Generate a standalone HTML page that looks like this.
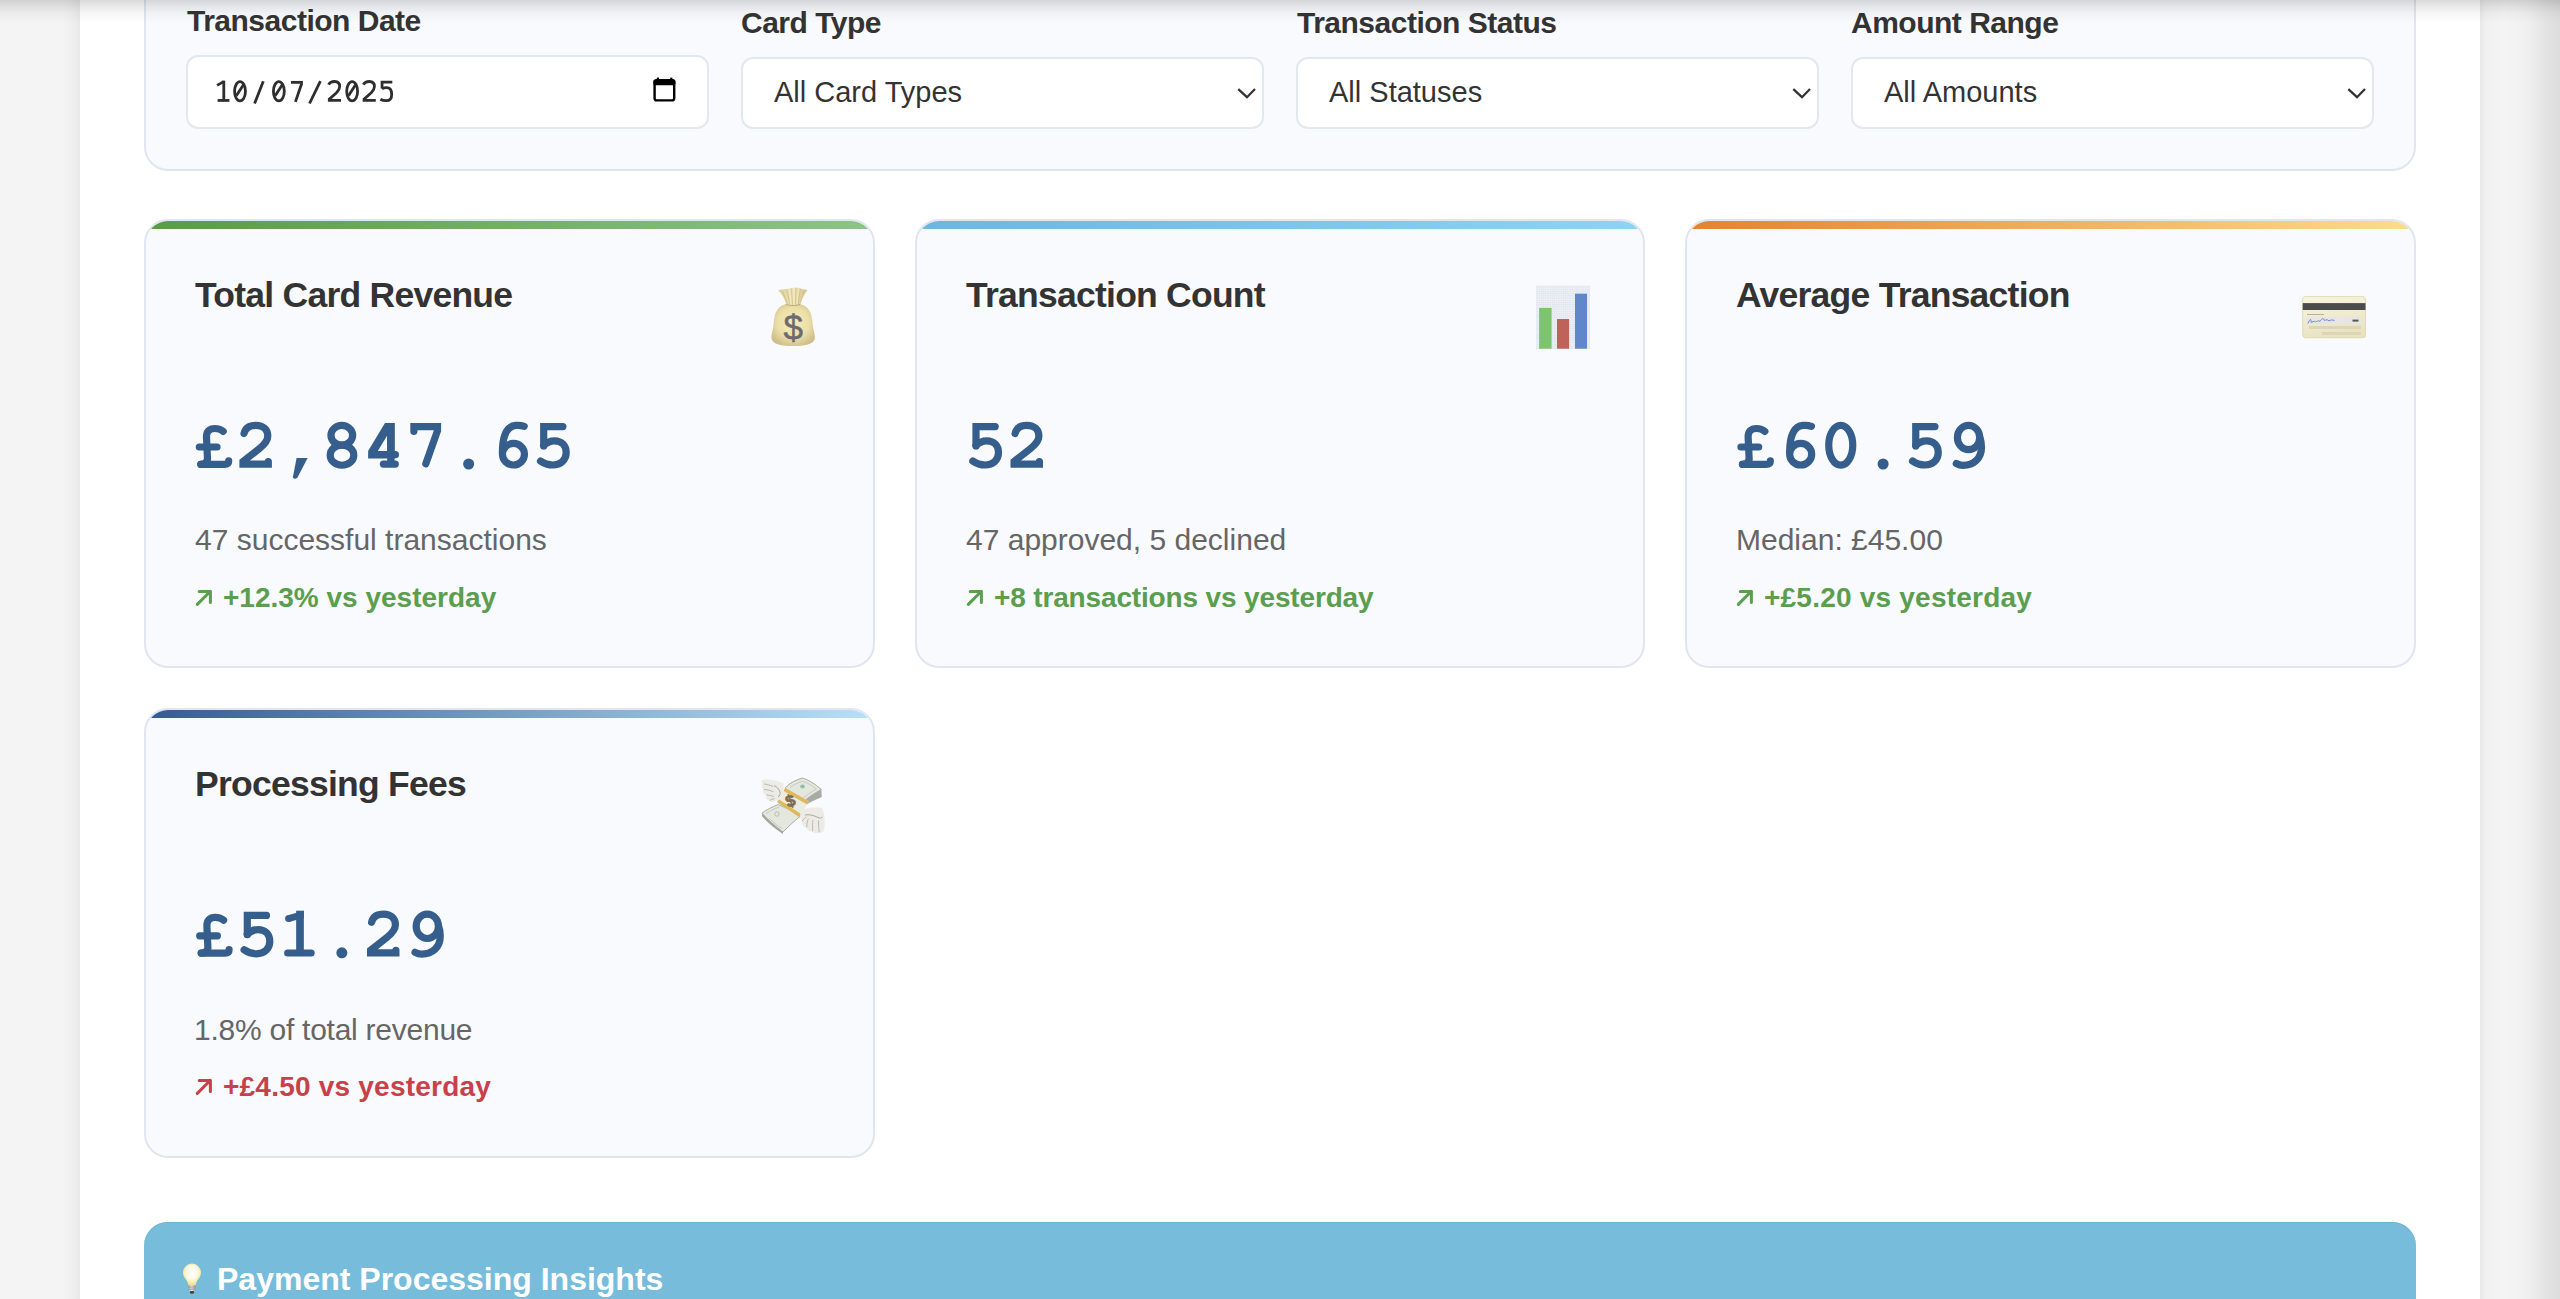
<!DOCTYPE html>
<html>
<head>
<meta charset="utf-8">
<style>
html,body{margin:0;padding:0;}
body{width:2560px;height:1299px;overflow:hidden;position:relative;background:#f5f5f5;font-family:"Liberation Sans",sans-serif;}
.abs{position:absolute;}
#edgeL{left:0;top:0;width:80px;height:1299px;background:linear-gradient(to right,#f4f4f4 0px,#f4f4f4 62px,#f0f0f0 70px,#ececec 76px,#e8e8e8 80px);}
#edgeR{left:2480px;top:0;width:80px;height:1299px;background:linear-gradient(to right,#e8e8e8 0px,#f1f1f1 6px,#f4f4f4 24px,#f2f2f2 40px,#f0f0f0 46px,#ebebeb 55px,#e4e4e4 65px,#dcdcdc 80px);}
#container{left:80px;top:0;width:2400px;height:1299px;background:#fff;}
#topshadow{left:0;top:0;width:2560px;height:24px;background:linear-gradient(to bottom,rgba(0,0,0,0.145) 0px,rgba(0,0,0,0.085) 6px,rgba(0,0,0,0.035) 13px,rgba(0,0,0,0) 23px);z-index:50;}
.panel{box-sizing:border-box;border:2px solid #e0e6ef;background:#f8fafd;border-radius:24px;}
.lbl{font-weight:bold;font-size:30px;line-height:30px;color:#333;letter-spacing:-0.5px;white-space:nowrap;}
.inp{box-sizing:border-box;border:2px solid #e2e8f0;background:#fff;border-radius:12px;}
.seltxt{font-size:29px;line-height:29px;color:#333;white-space:nowrap;}
.card{box-sizing:border-box;border:2px solid #e0e6ef;background:#f8fafd;border-radius:24px;overflow:hidden;}
.bar{position:absolute;left:0;top:0;right:0;height:8px;}
.ttl{font-weight:bold;font-size:35.5px;line-height:36px;color:#333;letter-spacing:-0.75px;white-space:nowrap;}
.sub{font-size:30px;line-height:28px;color:#666;letter-spacing:0px;white-space:nowrap;}
.chg{font-weight:bold;font-size:28px;line-height:28px;color:#5a9e4e;white-space:nowrap;}
.chg.neg{color:#c8404a;}
.arr{display:inline-block;vertical-align:top;position:relative;top:3px;left:-1px;margin-right:0px;}
</style>
</head>
<body>
<div id="edgeL" class="abs"></div>
<div id="edgeR" class="abs"></div>
<div id="container" class="abs"></div>

<!-- filter panel -->
<div class="abs panel" style="left:144px;top:-80px;width:2272px;height:251px;"></div>

<div class="abs lbl" style="left:187px;top:6px;">Transaction Date</div>
<div class="abs lbl" style="left:741px;top:8px;">Card Type</div>
<div class="abs lbl" style="left:1297px;top:8px;">Transaction Status</div>
<div class="abs lbl" style="left:1851px;top:8px;">Amount Range</div>

<div class="abs inp" style="left:186px;top:55px;width:523px;height:74px;"></div>
<div class="abs inp" style="left:741px;top:57px;width:523px;height:72px;"></div>
<div class="abs inp" style="left:1296px;top:57px;width:523px;height:72px;"></div>
<div class="abs inp" style="left:1851px;top:57px;width:523px;height:72px;"></div>

<svg class="abs" style="left:0px;top:0px;" width="420" height="120" viewBox="0 0 420 120">
<path d="M217.1 85.4 L223.6 81.6" fill="none" stroke="#2e2e2e" stroke-width="2.8" stroke-width="3"/>
<path d="M223.8 80.6 L223.8 99.5" fill="none" stroke="#2e2e2e" stroke-width="2.8"/>
<path d="M217.6 100.45 L229.4 100.45" fill="none" stroke="#2e2e2e" stroke-width="2.8" stroke-width="2.7"/>
<ellipse cx="240" cy="91.3" rx="5.45" ry="9.6" fill="none" stroke="#2e2e2e" stroke-width="2.8"/><path d="M236.3 95.7 L243.8 84.3" fill="none" stroke="#2e2e2e" stroke-width="2.8" stroke-width="2.6"/>
<path d="M254.6 103.5 L263.3 81.2" fill="none" stroke="#2e2e2e" stroke-width="2.8"/>
<ellipse cx="278.85" cy="91.3" rx="5.45" ry="9.6" fill="none" stroke="#2e2e2e" stroke-width="2.8"/><path d="M275.15000000000003 95.7 L282.65000000000003 84.3" fill="none" stroke="#2e2e2e" stroke-width="2.8" stroke-width="2.6"/>
<path d="M291 82.35 L302.9 82.35" fill="none" stroke="#2e2e2e" stroke-width="2.8" stroke-width="2.7"/>
<path d="M301.8 83.3 L295.4 101.9" fill="none" stroke="#2e2e2e" stroke-width="2.8" stroke-width="2.9"/>
<path d="M309.5 103.5 L320.4 81.2" fill="none" stroke="#2e2e2e" stroke-width="2.8"/>
<path transform="translate(0 0)" d="M328.5 84.6 C330 82 332.3 81.5 334.6 81.5 C338 81.5 339.7 83.6 339.7 86.6 C339.7 89 338.5 90.8 336.5 92.8 L329.3 99.2 L329.3 100.3 L341 100.3" fill="none" stroke="#2e2e2e" stroke-width="2.8" stroke-linejoin="miter"/>
<ellipse cx="352.15" cy="91.3" rx="5.45" ry="9.6" fill="none" stroke="#2e2e2e" stroke-width="2.8"/><path d="M348.45 95.7 L355.95 84.3" fill="none" stroke="#2e2e2e" stroke-width="2.8" stroke-width="2.6"/>
<path transform="translate(34.75 0)" d="M328.5 84.6 C330 82 332.3 81.5 334.6 81.5 C338 81.5 339.7 83.6 339.7 86.6 C339.7 89 338.5 90.8 336.5 92.8 L329.3 99.2 L329.3 100.3 L341 100.3" fill="none" stroke="#2e2e2e" stroke-width="2.8" stroke-linejoin="miter"/>
<path d="M392.3 82.05 L382.05 82.05 L382.05 88.4" fill="none" stroke="#2e2e2e" stroke-width="2.8" stroke-linejoin="miter" stroke-width="2.6"/>
<path d="M382.05 88.8 C383.5 87.9 385 87.6 386.5 87.6 C390.5 87.6 391.7 90.6 391.7 94.4 C391.7 98.6 389.6 100.7 386.2 100.7 C384 100.7 382 100.2 380.4 99.2" fill="none" stroke="#2e2e2e" stroke-width="2.8"/>
</svg>
<svg class="abs" style="left:650px;top:75px;" width="30" height="30" viewBox="0 0 30 30">
  <rect x="4.6" y="5.2" width="19.6" height="20.2" rx="2.2" fill="none" stroke="#000" stroke-width="2.4"/>
  <rect x="3.4" y="4.6" width="22" height="5.6" rx="1.5" fill="#000"/>
  <rect x="6.8" y="2.6" width="2.2" height="4" fill="#000"/>
  <rect x="20.2" y="2.6" width="2.2" height="4" fill="#000"/>
</svg>

<div class="abs seltxt" style="left:774px;top:78px;">All Card Types</div>
<div class="abs seltxt" style="left:1329px;top:78px;">All Statuses</div>
<div class="abs seltxt" style="left:1884px;top:78px;">All Amounts</div>

<svg class="abs" style="left:1236px;top:86px;" width="22" height="14" viewBox="0 0 22 14"><path d="M2.3 3.1 L11 11.2 L19 3" fill="none" stroke="#333" stroke-width="2.3"/></svg>
<svg class="abs" style="left:1791px;top:86px;" width="22" height="14" viewBox="0 0 22 14"><path d="M2.3 3.1 L11 11.2 L19 3" fill="none" stroke="#333" stroke-width="2.3"/></svg>
<svg class="abs" style="left:2346px;top:86px;" width="22" height="14" viewBox="0 0 22 14"><path d="M2.3 3.1 L11 11.2 L19 3" fill="none" stroke="#333" stroke-width="2.3"/></svg>

<!-- cards -->
<div class="abs card" style="left:144px;top:219px;width:731px;height:449px;"><div class="bar" style="background:linear-gradient(to right,#5a9a4b,#8cc487);"></div></div>
<div class="abs card" style="left:915px;top:219px;width:730px;height:449px;"><div class="bar" style="background:linear-gradient(to right,#6fb6d8,#8fd2f4);"></div></div>
<div class="abs card" style="left:1685px;top:219px;width:731px;height:449px;"><div class="bar" style="background:linear-gradient(to right,#e5822f,#f9dd8c);"></div></div>
<div class="abs card" style="left:144px;top:708px;width:731px;height:450px;"><div class="bar" style="background:linear-gradient(to right,#355c8c,#b8e0f8);"></div></div>

<div class="abs ttl" style="left:195px;top:277px;">Total Card Revenue</div>
<div class="abs ttl" style="left:966px;top:277px;">Transaction Count</div>
<div class="abs ttl" style="left:1736px;top:277px;">Average Transaction</div>
<div class="abs ttl" style="left:195px;top:766px;">Processing Fees</div>


<!-- VALS -->
<svg class="abs" style="left:0;top:0;" width="0" height="0"><defs>
<g id="gL"><path d="M-14.6 -20.7 L3.1 -20.7" fill="none" stroke="#355e8c" stroke-width="7.2" stroke-linecap="round"/>
<path d="M-13.1 -3.4 L10.5 -3.4 Q14.8 -3.4 14.8 -6.8" fill="none" stroke="#355e8c" stroke-width="7.2" stroke-linecap="round" stroke-linejoin="round"/>
<path d="M-13.1 -3.4 Q-7 -3.6 -6.4 -8.5 L-7.4 -30 C-7.9 -36 -4.5 -39.2 1 -39.2 C4.5 -39.2 7.5 -38 9.3 -36.3" fill="none" stroke="#355e8c" stroke-width="7.2" stroke-linecap="round" stroke-linejoin="round"/></g>
<g id="g2"><path d="M-12.3 -34.2 C-10.8 -40.7 -6.3 -42.4 -0.3 -42.4 C6.7 -42.4 11.5 -38.2 11.5 -31.7 C11.5 -26.7 8.2 -23.2 3.2 -19.2 L-13.3 -6.2 L-13.3 -3.6 L12 -3.6 L12 -6.2" fill="none" stroke="#355e8c" stroke-width="7.2" stroke-linecap="round" stroke-linejoin="miter" stroke-miterlimit="10"/></g>
<g id="gc"><path d="M-2.1 -9.7 L8.9 -9.7 L-1.2 9.8 Q-3.7 12.3 -5.9 9.8 Z" fill="#355e8c"/></g>
<g id="g8"><ellipse cx="0.7" cy="-32.4" rx="10.85" ry="9.85" fill="none" stroke="#355e8c" stroke-width="7.2" stroke-linecap="round"/>
<ellipse cx="0.9" cy="-12.5" rx="11.8" ry="10.05" fill="none" stroke="#355e8c" stroke-width="7.2" stroke-linecap="round"/></g>
<g id="g4"><path d="M1.5 -44.6 L11.1 -44.6 L11.1 -9.3 L-15.4 -9.3 L-15.4 -16.7 Z M-5.7 -16.7 L3.7 -16.7 L3.7 -32.3 Z" fill="#355e8c" fill-rule="evenodd"/>
<rect x="3.7" y="-44.6" width="7.4" height="41.1" fill="#355e8c"/>
<path d="M11.1 -13 L11.9 -13" fill="none" stroke="#355e8c" stroke-width="7.2" stroke-linecap="round"/>
<path d="M-0.1 -3.6 L11.8 -3.6" fill="none" stroke="#355e8c" stroke-width="7.2" stroke-linecap="round"/></g>
<g id="g7"><path d="M-12 -36.4 L-12 -41 L11.6 -41 L11.6 -37 L-0.1 -3.9" fill="none" stroke="#355e8c" stroke-width="7.2" stroke-linecap="round" stroke-linejoin="miter"/></g>
<g id="gd"><circle cx="0.35" cy="-3.7" r="5.5" fill="#355e8c"/></g>
<g id="g6"><ellipse cx="2.75" cy="-13.5" rx="11" ry="10.8" fill="none" stroke="#355e8c" stroke-width="7.2" stroke-linecap="round"/>
<path d="M13.5 -41.4 C11 -42.3 8 -42.6 5 -42.3 C-3 -41.5 -8.3 -33 -8.3 -15" fill="none" stroke="#355e8c" stroke-width="7.2" stroke-linecap="round"/></g>
<g id="g5"><path d="M9.8 -41.1 L-9.4 -41.1 L-9.4 -21.8" fill="none" stroke="#355e8c" stroke-width="7.2" stroke-linecap="round" stroke-linejoin="miter"/>
<path d="M-9.4 -22.2 C-6.1 -25.7 -2.1 -26.9 1.4 -26.9 C8.9 -26.9 13.1 -21.7 13.1 -15.2 C13.1 -7.7 7.4 -2.7 -0.1 -2.7 C-5.1 -2.7 -9.1 -4.2 -12.6 -6.7" fill="none" stroke="#355e8c" stroke-width="7.2" stroke-linecap="round"/></g>
<g id="g0"><ellipse cx="0.4" cy="-22.4" rx="12" ry="19.9" fill="none" stroke="#355e8c" stroke-width="7.2" stroke-linecap="round"/></g>
<g id="g9"><ellipse cx="1" cy="-30.2" rx="11.15" ry="12.2" fill="none" stroke="#355e8c" stroke-width="7.2" stroke-linecap="round"/>
<path d="M12.15 -31 C13.4 -27.5 13.95 -24.5 13.95 -20.5 C13.95 -9.5 6.45 -2.4 -4.55 -2.4 C-7.05 -2.4 -9.05 -3 -11.25 -4.2" fill="none" stroke="#355e8c" stroke-width="7.2" stroke-linecap="round"/></g>
<g id="g1"><rect x="-2.95" y="-45.8" width="7.7" height="42.4" fill="#355e8c"/>
<path d="M-10.4 -41.6 L4.75 -45.8 L4.75 -38.5 L-10.4 -34.4 Z" fill="#355e8c"/>
<circle cx="-10.4" cy="-38" r="3.6" fill="#355e8c"/>
<path d="M-11.4 -3.5 L12 -3.5" fill="none" stroke="#355e8c" stroke-width="7.2" stroke-linecap="round" stroke-width="7.4"/></g>
</defs></svg>
<svg class="abs" style="left:183px;top:407px;" width="441" height="80" viewBox="0 0 441 80"><use href="#gL" x="30.90" y="60.70"/><use href="#g2" x="73.30" y="60.70"/><use href="#gc" x="115.70" y="60.70"/><use href="#g8" x="158.10" y="60.70"/><use href="#g4" x="200.50" y="60.70"/><use href="#g7" x="242.90" y="60.70"/><use href="#gd" x="285.30" y="60.70"/><use href="#g6" x="327.70" y="60.70"/><use href="#g5" x="370.10" y="60.70"/></svg>
<svg class="abs" style="left:955px;top:407px;" width="144" height="80" viewBox="0 0 144 80"><use href="#g5" x="30.40" y="60.70"/><use href="#g2" x="72.40" y="60.70"/></svg>
<svg class="abs" style="left:1725px;top:407px;" width="314" height="80" viewBox="0 0 314 80"><use href="#gL" x="30.55" y="60.70"/><use href="#g6" x="72.95" y="60.70"/><use href="#g0" x="115.35" y="60.70"/><use href="#gd" x="157.75" y="60.70"/><use href="#g5" x="200.15" y="60.70"/><use href="#g9" x="242.55" y="60.70"/></svg>
<svg class="abs" style="left:184px;top:896px;" width="314" height="80" viewBox="0 0 314 80"><use href="#gL" x="30.30" y="60.50"/><use href="#g5" x="72.70" y="60.50"/><use href="#g1" x="115.10" y="60.50"/><use href="#gd" x="157.50" y="60.50"/><use href="#g2" x="199.90" y="60.50"/><use href="#g9" x="242.30" y="60.50"/></svg>
<!-- /VALS -->
<div class="abs sub" style="left:195px;top:526px;">47 successful transactions</div>
<div class="abs sub" style="left:966px;top:526px;">47 approved, 5 declined</div>
<div class="abs sub" style="left:1736px;top:526px;">Median: £45.00</div>
<div class="abs sub" style="left:194px;top:1016px;letter-spacing:-0.25px;">1.8% of total revenue</div>

<div class="abs chg" style="left:195px;top:584px;"><svg class="arr" width="28" height="28" viewBox="0 0 28 28"><path d="M3.3 17.4 L16.4 4.3 M5.2 4.4 L16.4 4.4 L16.4 15.6" fill="none" stroke="currentColor" stroke-width="3" stroke-linecap="round" stroke-linejoin="round"/></svg>+12.3% vs yesterday</div>
<div class="abs chg" style="left:966px;top:584px;letter-spacing:-0.15px;"><svg class="arr" width="28" height="28" viewBox="0 0 28 28"><path d="M3.3 17.4 L16.4 4.3 M5.2 4.4 L16.4 4.4 L16.4 15.6" fill="none" stroke="currentColor" stroke-width="3" stroke-linecap="round" stroke-linejoin="round"/></svg>+8 transactions vs yesterday</div>
<div class="abs chg" style="left:1736px;top:584px;letter-spacing:0.22px;"><svg class="arr" width="28" height="28" viewBox="0 0 28 28"><path d="M3.3 17.4 L16.4 4.3 M5.2 4.4 L16.4 4.4 L16.4 15.6" fill="none" stroke="currentColor" stroke-width="3" stroke-linecap="round" stroke-linejoin="round"/></svg>+£5.20 vs yesterday</div>
<div class="abs chg neg" style="left:195px;top:1073px;letter-spacing:0.22px;"><svg class="arr" width="28" height="28" viewBox="0 0 28 28"><path d="M3.3 17.4 L16.4 4.3 M5.2 4.4 L16.4 4.4 L16.4 15.6" fill="none" stroke="currentColor" stroke-width="3" stroke-linecap="round" stroke-linejoin="round"/></svg>+£4.50 vs yesterday</div>

<!-- icons -->
<svg class="abs" style="left:760px;top:280px;" width="60" height="72" viewBox="0 0 60 72">
  <defs>
    <radialGradient id="bagG" cx="0.5" cy="0.45" r="0.6">
      <stop offset="0" stop-color="#f6ebbb"/>
      <stop offset="0.6" stop-color="#ecdfa8"/>
      <stop offset="1" stop-color="#cdbd88"/>
    </radialGradient>
    <linearGradient id="flareG" x1="0" y1="0" x2="1" y2="0">
      <stop offset="0" stop-color="#d9cb98"/>
      <stop offset="0.5" stop-color="#efe4b6"/>
      <stop offset="1" stop-color="#d4c48f"/>
    </linearGradient>
  </defs>
  <path d="M26 24 C18 26 14.5 32 13.8 42 C13.2 50 11 54.5 11.6 58.5 C12.5 64.5 22 66 33 66 C44 66 54 64.5 54.8 58.5 C55.3 54.5 53.2 50 52.5 42 C51.8 32 48 26 40 24 Z" fill="url(#bagG)"/>
  <path d="M26.5 25 C25 19 21.5 13.5 18 10.2 C23 8.8 28 9.2 31 8.2 C34 7.2 38 7.6 40.5 8.4 C43 9.2 46 9.6 47.7 9.8 C45 13.5 41.5 19 40 25 Z" fill="url(#flareG)"/>
  <path d="M22.5 11.5 L27.5 24 M27 9.5 L30 24.5 M31.5 8.5 L32.5 24.8 M36 8.2 L35.5 24.8 M40.5 8.8 L38 24.5 M44.5 9.8 L39.8 24" fill="none" stroke="#c8b782" stroke-width="0.9" opacity="0.75"/>
  <path d="M29 9 L31 24.5 M34 8 L34 24.8 M38.5 8.5 L36.8 24.6" fill="none" stroke="#faf3d2" stroke-width="0.9" opacity="0.8"/>
  <path d="M26 24.5 Q33 26.5 40.2 24.5" fill="none" stroke="#bfae7a" stroke-width="1.2"/>
  <text x="33.2" y="60.2" text-anchor="middle" font-family="Liberation Sans" font-size="35" fill="#6c6a70" stroke="#6c6a70" stroke-width="0.5">$</text>
</svg>

<svg class="abs" style="left:1530px;top:280px;" width="64" height="72" viewBox="0 0 64 72">
  <defs>
    <pattern id="grid" width="2.2" height="2.2" patternUnits="userSpaceOnUse">
      <rect width="2.2" height="2.2" fill="#f2f4f7"/>
      <rect width="2.2" height="0.9" fill="#dfe6ef"/>
      <rect width="0.9" height="2.2" fill="#e3e8ef"/>
    </pattern>
  </defs>
  <rect x="6" y="5.5" width="54" height="63.5" fill="url(#grid)"/>
  <rect x="9.1" y="27.9" width="12.5" height="40.8" fill="#7dc56c"/>
  <rect x="27" y="39" width="12.1" height="29.7" fill="#c0625a"/>
  <rect x="45" y="13.7" width="12" height="55" fill="#6187cb"/>
</svg>

<svg class="abs" style="left:2290px;top:280px;" width="88" height="72" viewBox="0 0 88 72">
  <defs>
    <linearGradient id="cardG" x1="0" y1="0" x2="0.3" y2="1">
      <stop offset="0" stop-color="#f8f6e0"/>
      <stop offset="1" stop-color="#e9e3c2"/>
    </linearGradient>
  </defs>
  <rect x="12.7" y="16.6" width="62.8" height="41.1" rx="2.8" fill="url(#cardG)" stroke="#dcd3a8" stroke-width="0.8"/>
  <rect x="12.7" y="23.1" width="62.8" height="6.9" fill="#4b4b4b"/>
  <rect x="16" y="37.3" width="56" height="6.6" fill="#e6e6e6"/>
  <path d="M18 43.5 C19.5 39.5 21.5 38 21 41.5 C20.5 44 23.5 40.5 25 41.5 C26.5 42.5 28 39.5 30 41.5 C31.5 38.5 33.5 37.5 34.5 40.5 C36 40 37.5 39 39 41 C40.5 40 42.5 39.5 44.5 40.5" fill="none" stroke="#6f88c6" stroke-width="1"/>
  <rect x="62.5" y="39.6" width="6" height="2" fill="#555"/>
  <rect x="17" y="34.3" width="17" height="0.7" fill="#77736a" opacity="0.7"/>
  <rect x="19" y="46" width="52" height="3" fill="#ddd6b4"/>
  <rect x="32" y="52" width="39" height="3" fill="#ddd6b4"/>
</svg>

<svg class="abs" style="left:750px;top:770px;" width="84" height="72" viewBox="0 0 84 72">
  <!-- right half thickness -->
  <path d="M71.3 19.4 L71.8 26.9 C64 30 57 33.5 52.4 37.7 L51.3 33.4 C56 29 63 24 71.3 19.4 Z" fill="#a7aba3"/>
  <!-- left half thickness -->
  <path d="M12 43.1 L12 46.3 C18 53 25 59 33 64.1 L33 62 C25 56 18 50 12 43.1 Z" fill="#a3a79f"/>
  <!-- right half face -->
  <path d="M35.2 17.8 C40 13 46 9.5 52.4 8.1 C58 9.5 65 14 71.3 19.4 C63 24 56 29 51.3 33.4 L42 28 Z" fill="#e4e7de" stroke="#a0a59c" stroke-width="0.9"/>
  <path d="M40 17.5 C44 14.5 48 12.5 52.5 11.5 C57 12.5 62 15.5 66.5 19 C61 22 56 25.5 52 29" fill="none" stroke="#b9bdb4" stroke-width="0.7"/>
  <ellipse cx="52.5" cy="16.5" rx="2.3" ry="2.1" fill="#8fc0a6"/>
  <!-- left half face -->
  <path d="M28.2 34.5 C22 37 16 40 12 43.1 C18 50 25 56 33 62 C38 57 44 51 50.3 46.3 L40 40 Z" fill="#e4e7de" stroke="#a0a59c" stroke-width="0.9"/>
  <path d="M16 43.5 C21 40.5 25 38.5 29 37 M19 48 C23 52 27 55.5 32 58.5" fill="none" stroke="#b9bdb4" stroke-width="0.7"/>
  <circle cx="27" cy="44" r="2.2" fill="none" stroke="#b5b9b0" stroke-width="0.9"/>
  <!-- band -->
  <path d="M35.2 17.8 L58.9 31.2 L49.7 47.4 L27.1 32.3 Z" fill="#ecebdf"/>
  <path d="M35.2 17.8 L58.9 31.2 L57.2 34.4 L33.6 21 Z" fill="#ddb95e"/>
  <path d="M28.8 29.3 L51.4 44.2 L49.7 47.4 L27.1 32.3 Z" fill="#ddb95e"/>
  <text x="40.5" y="36.5" text-anchor="middle" font-family="Liberation Sans" font-weight="bold" font-size="16.5" fill="#7f6d4f" stroke="#7f6d4f" stroke-width="0.7" transform="rotate(-20 40.5 31.5)">$</text>
  <!-- left wing -->
  <path d="M33.5 13.5 C27 10 19 9 13 9.8 C10.5 10.3 10.8 12.8 13.5 13.8 C10.8 15 10.8 18.5 13.5 19.3 C11.8 21 13 24.5 16 24.8 C15 27 16.5 30.5 19.5 30.5 C20.5 32 22.5 32.5 24.5 31.5 L33.8 27.5 Z" fill="#ecebe6"/>
  <path d="M13.8 13.9 C17 14.5 20 15 23 16.5 M13.8 19.3 C17 19.8 20 20.3 23.5 21.5 M16.3 24.8 C19 25.2 21 25.5 24 26.5 M19.8 30.3 C21 29.8 22.5 29.2 24.5 28.5" fill="none" stroke="#b3b2ac" stroke-width="0.9"/>
  <path d="M24 15.5 C27 17 29 19 30 22 C30.5 24 29.5 26 28 27" fill="none" stroke="#a09f99" stroke-width="0.9"/>
  <!-- right wing -->
  <path d="M50.8 41 C56 37.5 65 36.8 72 37.8 C74.5 42 75 52 74.5 58.5 C74 62 71 63.5 69 62.5 C67.5 64 63.5 63.5 62.5 61.5 C60 62 57 60.5 56.5 57.5 C54 57.5 51.5 55 52 51.5 C50 49.5 49.8 44 50.8 41 Z" fill="#ecebe6"/>
  <path d="M52.3 51.3 C53.5 49 55 47.5 56.5 47 M56.8 57.3 C57 53 57.5 50 58.5 48.5 M62.7 61.3 C62.5 57 62.5 53 63 50 M69.2 62.3 C68.8 58 68.5 54 68.5 50.5" fill="none" stroke="#b3b2ac" stroke-width="0.9"/>
  <path d="M55 45 C59 44 64 45.5 68 47.5 C70 48.5 71.5 48 72.5 47" fill="none" stroke="#a09f99" stroke-width="0.9"/>
</svg>

<!-- insights -->
<div class="abs" style="left:144px;top:1222px;width:2272px;height:200px;background:#78bcdc;border-radius:24px;box-shadow:inset 0 1px 0 #6fb6d7;"></div>
<svg class="abs" style="left:180px;top:1260px;" width="26" height="39" viewBox="0 0 26 39">
  <defs>
    <radialGradient id="bulbG" cx="0.5" cy="0.42" r="0.62">
      <stop offset="0" stop-color="#ffffff"/>
      <stop offset="0.5" stop-color="#fdf9e2"/>
      <stop offset="0.85" stop-color="#f6e49a"/>
      <stop offset="1" stop-color="#f0d774"/>
    </radialGradient>
    <linearGradient id="baseG" x1="0" y1="0" x2="1" y2="0">
      <stop offset="0" stop-color="#a8a8a8"/>
      <stop offset="0.45" stop-color="#e4e4e4"/>
      <stop offset="1" stop-color="#9c9c9c"/>
    </linearGradient>
  </defs>
  <path d="M3 12.6 A9 9 0 1 1 21 12.6 C21 17 17.6 19.5 16.6 22 C16.1 23.4 15.9 24.2 15.9 25.2 L8.2 25.2 C8.2 24.2 8 23.4 7.4 22 C6.4 19.5 3 17 3 12.6 Z" fill="url(#bulbG)"/>
  <path d="M8.3 25 L15.8 25 L15.6 30 C15.4 31.2 14.6 31.7 13.5 31.7 L10.5 31.7 C9.4 31.7 8.6 31.2 8.4 30 Z" fill="url(#baseG)"/>
  <path d="M8.4 27.3 L15.7 26.8 M8.4 29.4 L15.6 28.9" stroke="#8f8f8f" stroke-width="0.7"/>
  <ellipse cx="12" cy="32.3" rx="2.3" ry="1.4" fill="#3b3b3b"/>
</svg>
<div class="abs" style="left:217px;top:1263px;font-weight:bold;font-size:32px;line-height:32px;color:#fff;white-space:nowrap;">Payment Processing Insights</div>

<div id="topshadow" class="abs"></div>

</body>
</html>
